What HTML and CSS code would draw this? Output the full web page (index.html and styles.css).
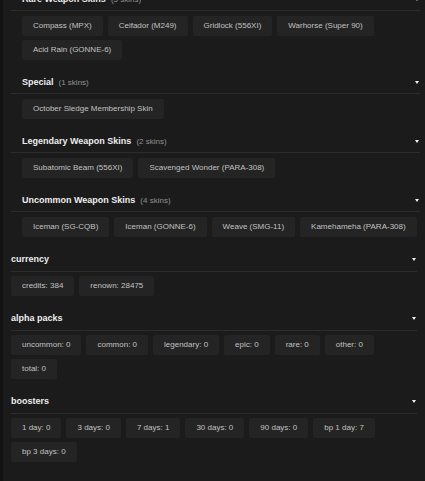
FILE: index.html
```html
<!DOCTYPE html>
<html>
<head>
<meta charset="utf-8">
<link rel="stylesheet" href="styles.css">
</head>
<body>
<div class="page">
  <div class="section">
    <div class="subsections">
      <div class="sub">
        <div class="sub-head"><span class="sub-title">Rare Weapon Skins<span class="count">(5 skins)</span></span><span class="caret"></span></div>
        <div class="chips">
          <span class="chip">Compass (MPX)</span>
          <span class="chip">Ceifador (M249)</span>
          <span class="chip">Gridlock (556XI)</span>
          <span class="chip">Warhorse (Super 90)</span>
          <span class="chip">Acid Rain (GONNE-6)</span>
        </div>
      </div>
      <div class="sub">
        <div class="sub-head"><span class="sub-title">Special<span class="count">(1 skins)</span></span><span class="caret"></span></div>
        <div class="chips">
          <span class="chip">October Sledge Membership Skin</span>
        </div>
      </div>
      <div class="sub">
        <div class="sub-head"><span class="sub-title">Legendary Weapon Skins<span class="count">(2 skins)</span></span><span class="caret"></span></div>
        <div class="chips">
          <span class="chip">Subatomic Beam (556XI)</span>
          <span class="chip">Scavenged Wonder (PARA-308)</span>
        </div>
      </div>
      <div class="sub">
        <div class="sub-head"><span class="sub-title">Uncommon Weapon Skins<span class="count">(4 skins)</span></span><span class="caret"></span></div>
        <div class="chips">
          <span class="chip">Iceman (SG-CQB)</span>
          <span class="chip">Iceman (GONNE-6)</span>
          <span class="chip">Weave (SMG-11)</span>
          <span class="chip">Kamehameha (PARA-308)</span>
        </div>
      </div>
    </div>
  </div>

  <div class="section">
    <div class="sec-head"><span class="sec-title">currency</span><span class="caret"></span></div>
    <div class="chips">
      <span class="chip">credits: 384</span>
      <span class="chip">renown: 28475</span>
    </div>
  </div>

  <div class="section">
    <div class="sec-head"><span class="sec-title">alpha packs</span><span class="caret"></span></div>
    <div class="chips">
      <span class="chip">uncommon: 0</span>
      <span class="chip">common: 0</span>
      <span class="chip">legendary: 0</span>
      <span class="chip">epic: 0</span>
      <span class="chip">rare: 0</span>
      <span class="chip">other: 0</span>
      <span class="chip">total: 0</span>
    </div>
  </div>

  <div class="section">
    <div class="sec-head"><span class="sec-title">boosters</span><span class="caret"></span></div>
    <div class="chips">
      <span class="chip">1 day: 0</span>
      <span class="chip">3 days: 0</span>
      <span class="chip">7 days: 1</span>
      <span class="chip">30 days: 0</span>
      <span class="chip">90 days: 0</span>
      <span class="chip">bp 1 day: 7</span>
      <span class="chip">bp 3 days: 0</span>
    </div>
  </div>
</div>
</body>
</html>
```

FILE: styles.css
```css
html, body {
  margin: 0;
  padding: 0;
  background: #1b1b1b;
  overflow: hidden;
}

.page {
  min-height: calc(100vh + 7px);
  box-sizing: border-box;
  border-left: 3px solid #121212;
  padding: 0 5px 0 8px;
  margin-top: -7px;
  font-family: "Liberation Sans", Arial, sans-serif;
  color: #e6e6e6;
}

.section {
  margin-bottom: 16px;
}

.sub {
  margin-bottom: 16px;
}

.sub:last-child {
  margin-bottom: 0;
}

.sec-head,
.sub-head {
  display: flex;
  justify-content: space-between;
  align-items: center;
  font-size: 9px;
  font-weight: bold;
  line-height: 12px;
  color: #ededed;
}

.sec-head {
  padding: 0 1px 6px 0;
  margin-right: 3px;
  border-bottom: 1px solid #2c2c2c;
}

.sub-head {
  padding: 0 1px 4px 11px;
  border-bottom: 1px solid #2c2c2c;
}

.count {
  margin-left: 5px;
  font-size: 8px;
  font-weight: normal;
  color: #929292;
}

.caret {
  width: 0;
  height: 0;
  border-left: 2px solid transparent;
  border-right: 2px solid transparent;
  border-top: 3px solid #f2f2f2;
}

.chips {
  display: flex;
  flex-wrap: wrap;
  gap: 4px 5px;
  margin: 4px 3px 0 0;
}

.sub .chips {
  margin: 5px 0 0 0;
  padding-left: 11px;
}

.chip {
  display: inline-block;
  background: #242424;
  border-radius: 2px;
  padding: 5px 11px;
  font-size: 8px;
  line-height: 10px;
  color: #c2c2c2;
  white-space: nowrap;
}
```
